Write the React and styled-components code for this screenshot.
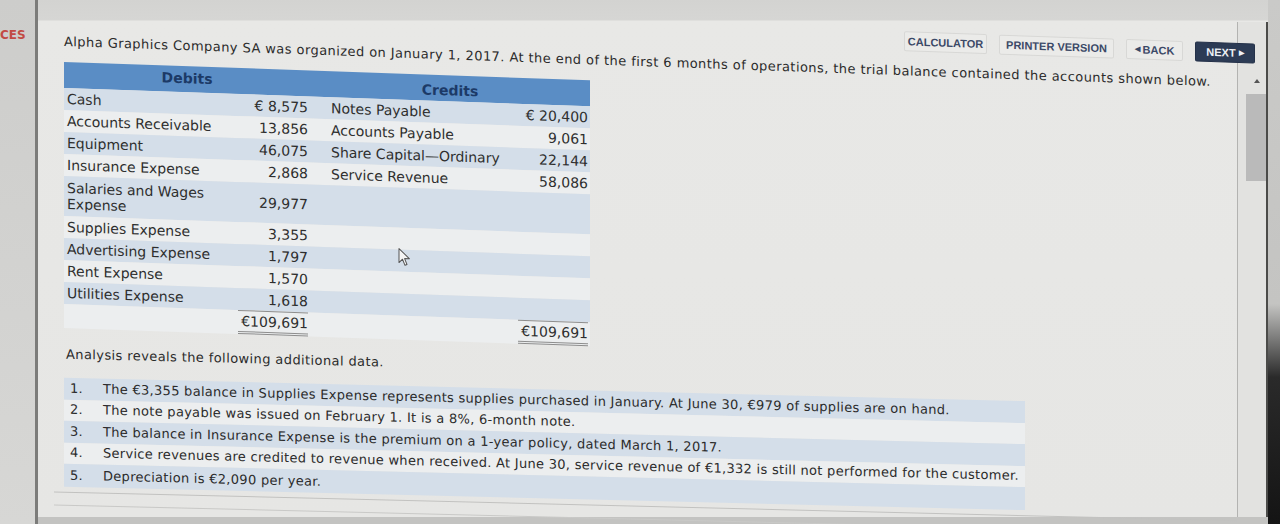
import React from 'react';
import styled, { createGlobalStyle } from 'styled-components';

const GlobalStyle = createGlobalStyle`
  html, body { margin: 0; padding: 0; background: #cbcbc9; }
  body { font-family: "DejaVu Sans", Verdana, sans-serif; }
`;

const Screen = styled.div`
  display: flex;
  width: 1280px;
  height: 524px;
  overflow: hidden;
  background: #cbcbc9;
`;

const Sidebar = styled.div`
  width: 38px;
  flex-shrink: 0;
  box-sizing: border-box;
  padding-top: 28px;
  background: linear-gradient(#cdcdcb, #d7d7d5);
  border-right: 3px solid #7c7c7a;
`;

const SideLabel = styled.div`
  font: bold 12px "DejaVu Sans", sans-serif;
  color: #c24a44;
`;

const Panel = styled.div`
  flex: 1;
  display: grid;
  grid-template-columns: 1fr 31px;
  grid-template-rows: auto 1fr;
  background: linear-gradient(#d3d3d1 0, #d6d6d4 20px, #e8e8e6 21px, #e6e6e4 100%);
  border-bottom: 7px solid #c3c3c1;
`;

const Toolbar = styled.div`
  grid-column: 1 / -1;
  height: 22px;
  box-sizing: border-box;
  padding: 0 13px 0 0;
  display: flex;
  justify-content: flex-end;
  align-items: center;
  gap: 12px;
  transform: skewY(2deg);
  transform-origin: 0 0;
`;

const ToolButton = styled.button`
  width: ${p => p.$w}px;
  height: 20px;
  padding: 0;
  box-sizing: border-box;
  display: flex;
  align-items: center;
  justify-content: center;
  gap: 3px;
  font: bold 11px "Liberation Sans", Arial, sans-serif;
  color: ${p => (p.$primary ? '#eef1f6' : '#3b4967')};
  background: ${p => (p.$primary ? '#2c3b55' : '#ebebe9')};
  border: 1px solid ${p => (p.$primary ? '#243149' : '#d8d8d6')};
  border-radius: 2px;
`;

const Arrow = styled.span`
  font-size: 7px;
`;

const Content = styled.div`
  grid-column: 1;
  min-width: 0;
`;

const TopSection = styled.div`
  padding-left: 26px;
  transform: skewY(2deg);
  transform-origin: 0 0;
`;

const Intro = styled.p`
  margin: 11px 0 0;
  font-size: 13px;
  letter-spacing: 0.43px;
  line-height: 16px;
  color: #2b2b2b;
  white-space: nowrap;
`;

const TableWrap = styled.div`
  position: relative;
  width: 526px;
  margin-top: 12px;
`;

const Ledger = styled.table`
  width: 526px;
  border-collapse: collapse;
  table-layout: fixed;
  font-size: 14px;
  color: #2e2e2e;
`;

const HeadCell = styled.th`
  height: 23px;
  padding: ${p => (p.$low ? '3px 0 0' : '0 0 2px')};
  background: #5a8dc5;
  color: #1c3a67;
  font-size: 14px;
  font-weight: bold;
  text-align: center;
`;

const Row = styled.tr`
  height: ${p => p.$h}px;
  background: ${p => (p.$shade ? '#d4dee9' : '#eceeef')};
`;

const Label = styled.td`
  padding: 0 0 0 ${p => (p.$credit ? 21 : 3)}px;
  line-height: 16px;
  vertical-align: middle;
  white-space: ${p => (p.$wrap ? 'normal' : 'nowrap')};
`;

const Amount = styled.td`
  padding: 0 2px 0 0;
  text-align: right;
  line-height: 16px;
  vertical-align: middle;
  white-space: nowrap;
`;

const Total = styled.div`
  margin-left: auto;
  width: 70px;
  padding: 2px 0 2px;
  text-align: right;
  border-top: 1px solid #8d8d8d;
  border-bottom: 3px double #8d8d8d;
`;

const Pointer = styled.svg`
  position: absolute;
  left: 334px;
  top: 174px;
`;

const BottomSection = styled.div`
  padding-left: 26px;
  margin-top: 19px;
  transform: skewY(1.4deg);
  transform-origin: 0 0;
`;

const Analysis = styled.p`
  margin: 0;
  padding-left: 2px;
  font-size: 13px;
  letter-spacing: 0.4px;
  line-height: 16px;
  color: #2b2b2b;
`;

const DataList = styled.ol`
  list-style: none;
  margin: 15px 0 0;
  padding: 0;
  width: 961px;
`;

const Item = styled.li`
  display: flex;
  align-items: center;
  height: ${p => (p.$last ? 23 : 21.5)}px;
  padding-left: 6px;
  font-size: 13px;
  letter-spacing: 0.29px;
  line-height: 16px;
  color: #2b2b2b;
  white-space: nowrap;
  background: ${p => (p.$shade ? '#d4dee9' : '#eceeef')};
`;

const Num = styled.span`
  width: 33px;
  flex-shrink: 0;
`;

const FooterRule = styled.div`
  margin: 5px 0 0 -10px;
  height: 12px;
  border-top: 1px solid #c2c2c0;
  border-bottom: 1px solid #c9c9c7;
`;

const Scroll = styled.div`
  grid-column: 2;
  display: flex;
  flex-direction: column;
  align-items: flex-end;
  border-left: 1px solid #b3b3b1;
  border-right: 2px solid #4b4b49;
  background: #e2e2e0;
`;

const ScrollArrow = styled.div`
  margin: 57px 6px 0 0;
  width: 0;
  height: 0;
  border-left: 3px solid transparent;
  border-right: 3px solid transparent;
  border-bottom: 4px solid #555;
`;

const ScrollThumb = styled.div`
  margin-top: 11px;
  width: 20px;
  height: 87px;
  background: #bababa;
`;

const Bezel = styled.div`
  width: 12px;
  flex-shrink: 0;
  background: linear-gradient(#cacac8 0%, #c4c4c2 58%, #2a2a2a 72%, #141414 100%);
`;

const ledger = [
  ['Cash', '€ 8,575', 'Notes Payable', '€ 20,400'],
  ['Accounts Receivable', '13,856', 'Accounts Payable', '9,061'],
  ['Equipment', '46,075', 'Share Capital—Ordinary', '22,144'],
  ['Insurance Expense', '2,868', 'Service Revenue', '58,086'],
  ['Salaries and Wages Expense', '29,977', '', ''],
  ['Supplies Expense', '3,355', '', ''],
  ['Advertising Expense', '1,797', '', ''],
  ['Rent Expense', '1,570', '', ''],
  ['Utilities Expense', '1,618', '', ''],
];

const notes = [
  'The €3,355 balance in Supplies Expense represents supplies purchased in January. At June 30, €979 of supplies are on hand.',
  'The note payable was issued on February 1. It is a 8%, 6-month note.',
  'The balance in Insurance Expense is the premium on a 1-year policy, dated March 1, 2017.',
  'Service revenues are credited to revenue when received. At June 30, service revenue of €1,332 is still not performed for the customer.',
  'Depreciation is €2,090 per year.',
];

export default function App() {
  return (
    <>
      <GlobalStyle />
      <Screen>
        <Sidebar>
          <SideLabel>CES</SideLabel>
        </Sidebar>
        <Panel>
          <Toolbar>
            <ToolButton $w={83}>CALCULATOR</ToolButton>
            <ToolButton $w={115}>PRINTER VERSION</ToolButton>
            <ToolButton $w={57}><Arrow>◀</Arrow>BACK</ToolButton>
            <ToolButton $w={60} $primary>NEXT<Arrow>▶</Arrow></ToolButton>
          </Toolbar>
          <Content>
            <TopSection>
              <Intro>
                Alpha Graphics Company SA was organized on January 1, 2017. At the end of the first 6 months of operations, the trial balance contained the accounts shown below.
              </Intro>
              <TableWrap>
                <Ledger>
                  <colgroup>
                    <col style={{ width: 171 }} />
                    <col style={{ width: 75 }} />
                    <col style={{ width: 195 }} />
                    <col style={{ width: 85 }} />
                  </colgroup>
                  <thead>
                    <tr>
                      <HeadCell colSpan={2}>Debits</HeadCell>
                      <HeadCell colSpan={2} $low>Credits</HeadCell>
                    </tr>
                  </thead>
                  <tbody>
                    {ledger.map((r, i) => (
                      <Row key={r[0]} $shade={i % 2 === 0} $h={i === 4 ? 40 : 22}>
                        <Label $wrap={i === 4}>{r[0]}</Label>
                        <Amount>{r[1]}</Amount>
                        <Label $credit>{r[2]}</Label>
                        <Amount>{r[3]}</Amount>
                      </Row>
                    ))}
                    <Row $h={24}>
                      <Label />
                      <Amount><Total>€109,691</Total></Amount>
                      <Label $credit />
                      <Amount><Total>€109,691</Total></Amount>
                    </Row>
                  </tbody>
                </Ledger>
                <Pointer width="13" height="19" viewBox="0 0 13 19">
                  <path d="M1 1 L1 15 L4.5 11.5 L7 17.5 L9 16.6 L6.6 10.8 L11.5 10.8 Z" fill="#f4f4f4" stroke="#555" strokeWidth="1" strokeLinejoin="round" />
                </Pointer>
              </TableWrap>
            </TopSection>
            <BottomSection>
              <Analysis>Analysis reveals the following additional data.</Analysis>
              <DataList>
                {notes.map((n, i) => (
                  <Item key={i} $shade={i % 2 === 0} $last={i === notes.length - 1}>
                    <Num>{i + 1}.</Num>
                    {n}
                  </Item>
                ))}
              </DataList>
              <FooterRule />
            </BottomSection>
          </Content>
          <Scroll>
            <ScrollArrow />
            <ScrollThumb />
          </Scroll>
        </Panel>
        <Bezel />
      </Screen>
    </>
  );
}
